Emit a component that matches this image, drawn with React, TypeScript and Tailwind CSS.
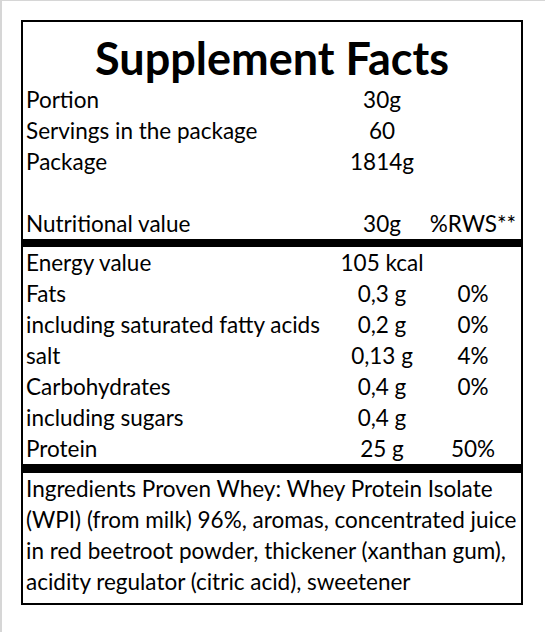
import React from "react";

type Row = { label: string; amount?: string; rws?: string };

const headRows: Row[] = [
  { label: "Portion", amount: "30g" },
  { label: "Servings in the package", amount: "60" },
  { label: "Package", amount: "1814g" },
  { label: "" },
  { label: "Nutritional value", amount: "30g", rws: "%RWS**" },
];

const nutrientRows: Row[] = [
  { label: "Energy value", amount: "105 kcal" },
  { label: "Fats", amount: "0,3 g", rws: "0%" },
  { label: "including saturated fatty acids", amount: "0,2 g", rws: "0%" },
  { label: "salt", amount: "0,13 g", rws: "4%" },
  { label: "Carbohydrates", amount: "0,4 g", rws: "0%" },
  { label: "including sugars", amount: "0,4 g" },
  { label: "Protein", amount: "25 g", rws: "50%" },
];

const ingredientLines = [
  "Ingredients Proven Whey: Whey Protein Isolate",
  "(WPI) (from milk) 96%, aromas, concentrated juice",
  "in red beetroot powder, thickener (xanthan gum),",
  "acidity regulator (citric acid), sweetener",
];

const FactRow: React.FC<{ row: Row }> = ({ row }) => (
  <div className="grid grid-cols-[1fr_86px_96px] h-[31px] leading-[31px] whitespace-nowrap">
    <span className="pl-[3px]">{row.label || "\u00a0"}</span>
    <span className="text-center">{row.amount}</span>
    <span className="text-center">{row.rws}</span>
  </div>
);

export default function App() {
  return (
    <div className="min-h-screen bg-white border-t border-l-2 border-[#d6d6d6] pt-[19px] pl-[19px]">
      <div
        className="w-[502px] border-2 border-black text-black text-[22.5px]"
        style={{ fontFamily: "Lato, 'Liberation Sans', sans-serif" }}
      >
        <div className="h-[62px] pt-[14px] text-center text-[45px] font-bold leading-none">
          Supplement Facts
        </div>
        {headRows.map((r, i) => (
          <FactRow key={i} row={r} />
        ))}
        <div className="h-[8px] bg-black" />
        {nutrientRows.map((r, i) => (
          <FactRow key={i} row={r} />
        ))}
        <div className="h-[9px] bg-black" />
        <div className="pl-[3px] pb-[6px] leading-[31px] whitespace-nowrap">
          {ingredientLines.map((line, i) => (
            <div key={i}>{line}</div>
          ))}
        </div>
      </div>
    </div>
  );
}
